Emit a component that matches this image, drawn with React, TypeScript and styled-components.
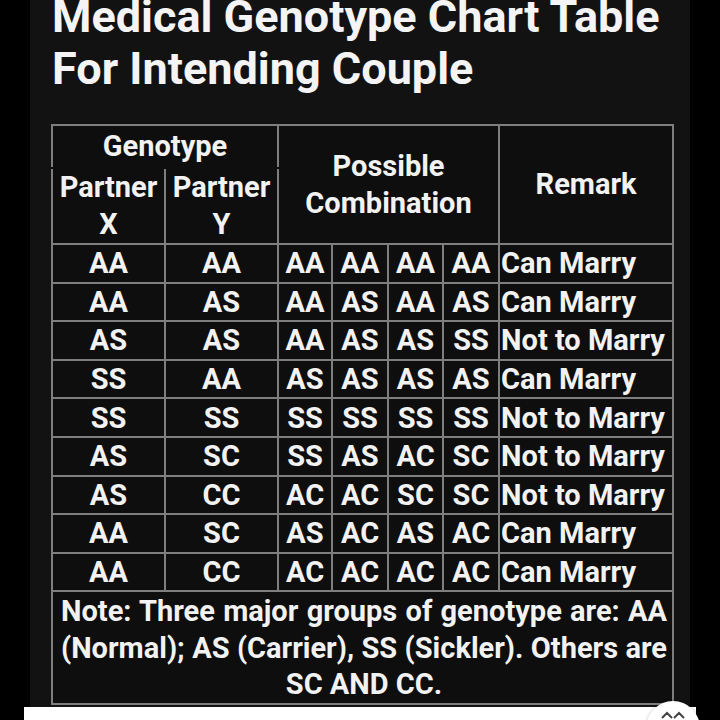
import React from 'react';
import styled, { createGlobalStyle } from 'styled-components';

const GlobalStyle = createGlobalStyle`
  html, body {
    margin: 0;
    padding: 0;
    background: #000;
    overflow: hidden;
  }
  body {
    font-family: Roboto, "Liberation Sans", sans-serif;
  }
`;

const Page = styled.div`
  position: relative;
  width: 720px;
  height: 720px;
  display: flex;
  flex-direction: column;
  overflow: hidden;
`;

const Panel = styled.div`
  margin: 0 30px;
  height: 707px;
  background: #121212;
  padding-left: 21px;
  box-sizing: border-box;
  overflow: hidden;
`;

const Title = styled.h1`
  margin: -9px 0 0 1px;
  font-size: 45px;
  line-height: 52px;
  font-weight: 700;
  color: #f4f4f4;
  white-space: nowrap;
`;

const Table = styled.table`
  margin-top: 29px;
  width: 621px;
  table-layout: fixed;
  border-collapse: collapse;
  background: #0e0e0e;
  color: #f2f2f2;
  font-size: 29px;
  font-weight: 700;
  text-align: center;
`;

const Cell = styled.td<{ $noTop?: boolean; $noBottom?: boolean; $align?: string }>`
  border: 2px solid #7e7e7e;
  border-top-color: ${(p) => (p.$noTop ? '#0e0e0e' : '#7e7e7e')};
  border-bottom-color: ${(p) => (p.$noBottom ? '#0e0e0e' : '#7e7e7e')};
  padding: 0 0 0 ${(p) => (p.$align === 'left' ? '1px' : '0')};
  text-align: ${(p) => p.$align || 'center'};
  white-space: nowrap;
  line-height: 34px;
  overflow: hidden;
`;

const HeadCell = styled(Cell)`
  line-height: 37px;
`;

const Row = styled.tr<{ $h: number }>`
  height: ${(p) => p.$h}px;
`;

const NoteCell = styled(Cell)`
  white-space: normal;
  line-height: 36.5px;
  padding: 0 5px 0 8px;
  text-align: justify;
  text-align-last: center;
`;

const BottomBar = styled.div`
  margin: 0 24px;
  height: 13px;
  background: #fff;
`;

const FloatButton = styled.div`
  position: absolute;
  left: 646px;
  top: 701px;
  width: 54px;
  height: 54px;
  border-radius: 50%;
  background: #fff;
  box-shadow: 0 0 3px rgba(0, 0, 0, 0.25);
  display: flex;
  justify-content: center;
  padding-top: 9px;
  box-sizing: border-box;
`;

const rows: [string, string, string[], string][] = [
  ['AA', 'AA', ['AA', 'AA', 'AA', 'AA'], 'Can Marry'],
  ['AA', 'AS', ['AA', 'AS', 'AA', 'AS'], 'Can Marry'],
  ['AS', 'AS', ['AA', 'AS', 'AS', 'SS'], 'Not to Marry'],
  ['SS', 'AA', ['AS', 'AS', 'AS', 'AS'], 'Can Marry'],
  ['SS', 'SS', ['SS', 'SS', 'SS', 'SS'], 'Not to Marry'],
  ['AS', 'SC', ['SS', 'AS', 'AC', 'SC'], 'Not to Marry'],
  ['AS', 'CC', ['AC', 'AC', 'SC', 'SC'], 'Not to Marry'],
  ['AA', 'SC', ['AS', 'AC', 'AS', 'AC'], 'Can Marry'],
  ['AA', 'CC', ['AC', 'AC', 'AC', 'AC'], 'Can Marry'],
];

const App: React.FC = () => {
  return (
    <Page>
      <GlobalStyle />
      <Panel>
        <Title>
          Medical Genotype Chart Table
          <br />
          For Intending Couple
        </Title>
        <Table>
          <colgroup>
            <col style={{ width: 113 }} />
            <col style={{ width: 113 }} />
            <col style={{ width: 54 }} />
            <col style={{ width: 56 }} />
            <col style={{ width: 55 }} />
            <col style={{ width: 56 }} />
            <col style={{ width: 174 }} />
          </colgroup>
          <tbody>
            <Row $h={43}>
              <HeadCell colSpan={2} $noBottom>Genotype</HeadCell>
              <HeadCell colSpan={4} rowSpan={2}>
                Possible
                <br />
                Combination
              </HeadCell>
              <HeadCell rowSpan={2}>Remark</HeadCell>
            </Row>
            <Row $h={75}>
              <HeadCell $noTop>
                Partner
                <br />X
              </HeadCell>
              <HeadCell $noTop>
                Partner
                <br />Y
              </HeadCell>
            </Row>
            {rows.map(([x, y, combos, remark], i) => (
              <Row $h={38.6} key={i}>
                <Cell>{x}</Cell>
                <Cell>{y}</Cell>
                {combos.map((c, j) => (
                  <Cell key={j}>{c}</Cell>
                ))}
                <Cell $align="left">{remark}</Cell>
              </Row>
            ))}
            <Row $h={113}>
              <NoteCell colSpan={7}>
                Note: Three major groups of genotype are: AA (Normal); AS (Carrier), SS (Sickler). Others are SC AND CC.
              </NoteCell>
            </Row>
          </tbody>
        </Table>
      </Panel>
      <BottomBar />
      <FloatButton>
        <svg width="26" height="10" viewBox="0 0 26 10">
          <path d="M2 8 L7 3 L12 8 M14 8 L19 3 L24 8" fill="none" stroke="#444" strokeWidth="2" />
        </svg>
      </FloatButton>
    </Page>
  );
};

export default App;
